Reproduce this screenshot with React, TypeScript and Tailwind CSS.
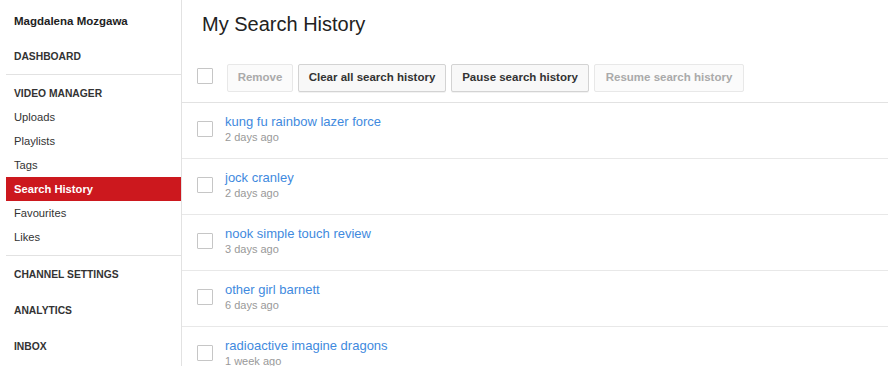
import React from 'react';

const subItems = ['Uploads', 'Playlists', 'Tags', 'Search History', 'Favourites', 'Likes'];

const history = [
  { term: 'kung fu rainbow lazer force', when: '2 days ago' },
  { term: 'jock cranley', when: '2 days ago' },
  { term: 'nook simple touch review', when: '3 days ago' },
  { term: 'other girl barnett', when: '6 days ago' },
  { term: 'radioactive imagine dragons', when: '1 week ago' },
];

const Checkbox: React.FC = () => (
  <span className="block w-4 h-4 border border-[#c6c6c6] bg-white rounded-[1px] shrink-0" />
);

const App: React.FC = () => {
  return (
    <div className="flex w-[888px] h-[366px] overflow-hidden bg-white font-['Liberation_Sans',Arial,sans-serif] text-[#333]">
      {/* Sidebar */}
      <div className="w-[182px] shrink-0 pl-[6px] border-r border-[#e2e2e2]">
        <div className="h-[40px] pl-2 pt-[13px] text-[11.5px] font-bold text-[#222]">Magdalena Mozgawa</div>
        <div className="h-[35px] pl-2 pt-[9px] text-[10.3px] font-bold uppercase text-[#333] border-b border-[#e2e2e2]">
          Dashboard
        </div>
        <div className="h-[30px] pl-2 pt-[11px] text-[10.3px] font-bold uppercase">Video Manager</div>
        <ul className="pb-[6px] border-b border-[#e2e2e2]">
          {subItems.map((item) => (
            <li
              key={item}
              className={
                item === 'Search History'
                  ? 'h-[24px] pl-2 flex items-center text-[11.2px] font-bold text-white bg-[#cc181e]'
                  : 'h-[24px] pl-2 flex items-center text-[11.2px] text-[#333]'
              }
            >
              {item}
            </li>
          ))}
        </ul>
        {['Channel Settings', 'Analytics', 'Inbox'].map((s) => (
          <div key={s} className="h-[36px] pl-2 pt-[11px] text-[10.3px] font-bold uppercase">
            {s}
          </div>
        ))}
      </div>

      {/* Main */}
      <div className="flex-1 min-w-0">
        <h1 className="pl-[20px] pt-[11px] h-[50px] text-[20px] text-[#222] leading-[26px]">My Search History</h1>
        <div className="h-[53px] pl-[15px] flex items-start pt-[14px] border-b border-[#e2e2e2]">
          <div className="mt-[4px] mr-[14px]">
            <Checkbox />
          </div>
          <div className="flex gap-[5px]">
            <button className="h-[28px] w-[66px] text-[11.5px] font-bold text-[#aaa] bg-[#fbfbfb] border border-[#e8e8e8] rounded-[2px]">
              Remove
            </button>
            <button className="h-[28px] w-[148px] text-[11.5px] font-bold text-[#333] bg-[#f8f8f8] border border-[#d3d3d3] rounded-[2px] shadow-[0_1px_0_rgba(0,0,0,0.05)]">
              Clear all search history
            </button>
            <button className="h-[28px] w-[138px] text-[11.5px] font-bold text-[#333] bg-[#f8f8f8] border border-[#d3d3d3] rounded-[2px] shadow-[0_1px_0_rgba(0,0,0,0.05)]">
              Pause search history
            </button>
            <button className="h-[28px] w-[150px] text-[11.5px] font-bold text-[#aaa] bg-[#fbfbfb] border border-[#e8e8e8] rounded-[2px]">
              Resume search history
            </button>
          </div>
        </div>
        <ul>
          {history.map((h) => (
            <li key={h.term} className="h-[56px] flex items-center pl-[15px] border-b border-[#e8e8e8]">
              <div className="mr-[12px] -mt-[3px]">
                <Checkbox />
              </div>
              <div className="flex flex-col -mt-[2px]">
                <a className="text-[13px] leading-[16px] text-[#3f8ade] cursor-pointer">{h.term}</a>
                <span className="text-[11px] leading-[15px] text-[#999]">{h.when}</span>
              </div>
            </li>
          ))}
        </ul>
      </div>
    </div>
  );
};

export default App;
